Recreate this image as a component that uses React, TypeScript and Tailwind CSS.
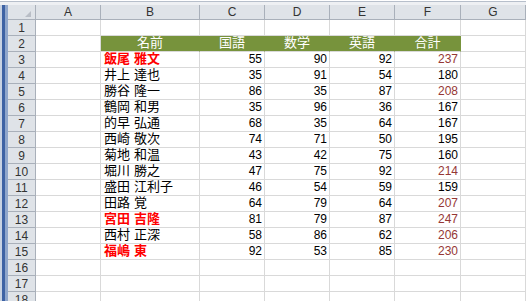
import React from 'react'

type Row = { name: string; jp: number; math: number; en: number; bold?: boolean }

const rows: Row[] = [
  { name: '飯尾 雅文', jp: 55, math: 90, en: 92, bold: true },
  { name: '井上 達也', jp: 35, math: 91, en: 54 },
  { name: '勝谷 隆一', jp: 86, math: 35, en: 87 },
  { name: '鶴岡 和男', jp: 35, math: 96, en: 36 },
  { name: '的早 弘通', jp: 68, math: 35, en: 64 },
  { name: '西崎 敬次', jp: 74, math: 71, en: 50 },
  { name: '菊地 和温', jp: 43, math: 42, en: 75 },
  { name: '堀川 勝之', jp: 47, math: 75, en: 92 },
  { name: '盛田 江利子', jp: 46, math: 54, en: 59 },
  { name: '田路 覚', jp: 64, math: 79, en: 64 },
  { name: '宮田 吉隆', jp: 81, math: 79, en: 87, bold: true },
  { name: '西村 正深', jp: 58, math: 86, en: 62 },
  { name: '福嶋 東', jp: 92, math: 53, en: 85, bold: true },
]

const font = { fontFamily: '"Liberation Sans", "Noto Sans CJK JP", sans-serif' }

const widths = ['w-[65px]', 'w-[99px]', 'w-[65px]', 'w-[65px]', 'w-[65px]', 'w-[66px]', 'w-[65px]']
const letters = ['A', 'B', 'C', 'D', 'E', 'F', 'G']

function RowHead({ n }: { n: number }) {
  return (
    <div className="flex h-[16px] w-[28px] shrink-0 items-center justify-center border-r border-b border-[#a9b0ba] bg-[#dfe3e8] text-[12px] leading-none text-[#333]">
      {n}
    </div>
  )
}

function Cell({ i, children, className = '' }: { i: number; children?: React.ReactNode; className?: string }) {
  return (
    <div
      className={`flex h-[16px] shrink-0 items-end overflow-hidden whitespace-nowrap border-r border-b border-[#d9d9d9] pb-[1px] text-[12px] leading-[14px] ${widths[i]} ${className}`}
    >
      {children}
    </div>
  )
}

export default function App() {
  const greenHead = ['名前', '国語', '数学', '英語', '合計']
  return (
    <div className="flex h-[301px] w-[526px] flex-col overflow-hidden bg-white text-black" style={font}>
      <div className="mt-px h-[4px] shrink-0 border-t border-t-[#b7bfcb] bg-[#eef0f3]" />
      <div className="flex flex-1">
        <div className="flex w-[8px] shrink-0">
          <div className="w-[2px] bg-[#c7d2e2]" />
          <div className="w-[3px] bg-[#3d62a4]" />
          <div className="w-[3px] bg-[#8fa6cb]" />
        </div>
        <div className="flex flex-col">
          {/* column headers */}
          <div className="flex h-[15px]">
            <div className="relative h-[15px] w-[28px] shrink-0 border-r border-b border-[#a9b0ba] bg-[#dfe3e8]">
              <svg className="absolute right-[4px] bottom-[2px]" width="6" height="6" viewBox="0 0 6 6">
                <polygon points="6,0 6,6 0,6" fill="#b9bec6" />
              </svg>
            </div>
            {letters.map((l, i) => (
              <div
                key={l}
                className={`flex h-[15px] shrink-0 items-center justify-center border-r border-b border-[#a9b0ba] bg-[#dfe3e8] text-[12px] leading-none text-[#333] ${widths[i]}`}
              >
                {l}
              </div>
            ))}
          </div>
          {/* row 1 */}
          <div className="flex">
            <RowHead n={1} />
            {letters.map((l, i) => (
              <Cell key={l} i={i} />
            ))}
          </div>
          {/* row 2 header */}
          <div className="flex">
            <RowHead n={2} />
            <Cell i={0} />
            {greenHead.map((h, k) => (
              <Cell key={h} i={k + 1} className="justify-center border-r-[#77933c] bg-[#77933c] text-[13px] text-white">
                {h}
              </Cell>
            ))}
            <Cell i={6} />
          </div>
          {rows.map((r, idx) => {
            const total = r.jp + r.math + r.en
            const [last, first] = r.name.split(' ')
            return (
              <div className="flex" key={r.name}>
                <RowHead n={idx + 3} />
                <Cell i={0} />
                <Cell i={1} className={`gap-[4px] pl-[3px] text-[13px] ${r.bold ? 'font-bold text-[#ff0000]' : ''}`}>
                  <span>{last}</span>
                  <span>{first}</span>
                </Cell>
                <Cell i={2} className="justify-end pr-[2px]">{r.jp}</Cell>
                <Cell i={3} className="justify-end pr-[2px]">{r.math}</Cell>
                <Cell i={4} className="justify-end pr-[2px]">{r.en}</Cell>
                <Cell i={5} className={`justify-end pr-[2px] ${total > 200 ? 'text-[#953735]' : ''}`}>{total}</Cell>
                <Cell i={6} />
              </div>
            )
          })}
          {[16, 17, 18].map((n) => (
            <div className="flex" key={n}>
              <RowHead n={n} />
              {letters.map((l, i) => (
                <Cell key={l} i={i} />
              ))}
            </div>
          ))}
        </div>
      </div>
    </div>
  )
}
